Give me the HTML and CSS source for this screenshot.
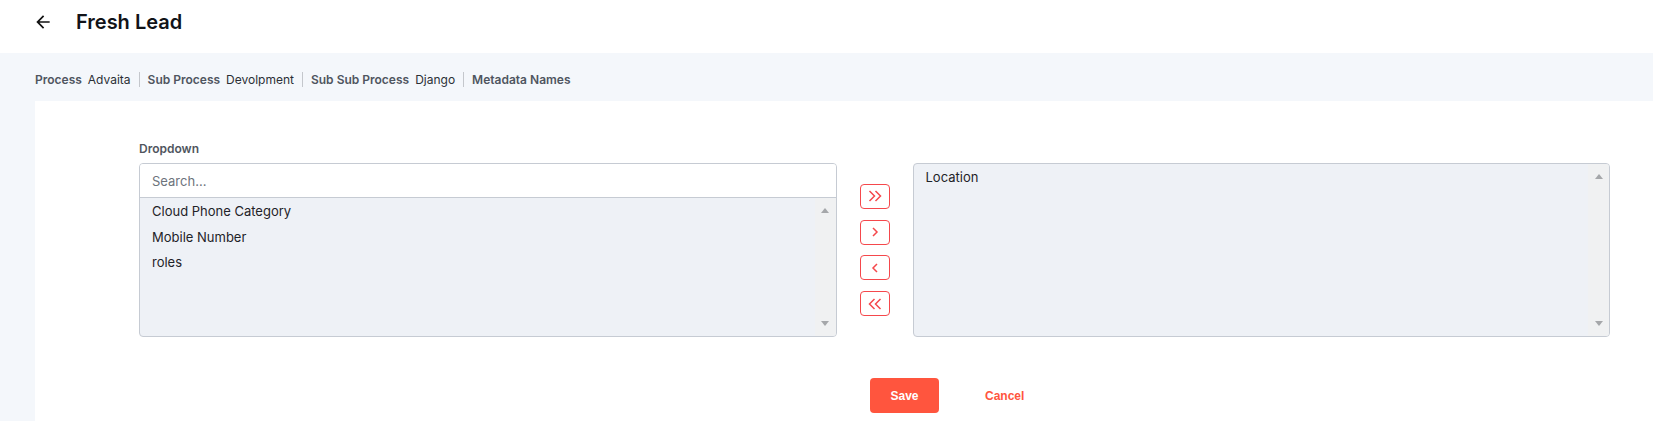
FILE: index.html
```html
<!DOCTYPE html>
<html lang="en">
<head>
<meta charset="utf-8">
<title>Fresh Lead</title>
<link rel="stylesheet" href="styles.css">
</head>
<body>
<header class="topbar">
  <button class="back" aria-label="Back">
    <svg width="20" height="20" viewBox="0 0 24 24"><path d="M20 11H7.830l5.590-5.590L12 4l-8 8 8 8 1.410-1.410L7.830 13H20v-2z" fill="#111"/></svg>
  </button>
  <h1 class="title">Fresh Lead</h1>
</header>
<main class="main">
  <nav class="crumbs">
    <span class="crumb"><span class="crumb-label">Process</span><span class="crumb-value">Advaita</span></span>
    <span class="sep"></span>
    <span class="crumb"><span class="crumb-label">Sub Process</span><span class="crumb-value">Devolpment</span></span>
    <span class="sep"></span>
    <span class="crumb"><span class="crumb-label">Sub Sub Process</span><span class="crumb-value">Django</span></span>
    <span class="sep"></span>
    <span class="crumb"><span class="crumb-label">Metadata Names</span></span>
  </nav>
  <section class="card">
    <div class="field-label">Dropdown</div>
    <div class="transfer">
      <div class="listbox">
        <div class="search"><input class="search-input" type="text" placeholder="Search..."></div>
        <div class="list-wrap">
          <ul class="items">
            <li>Cloud Phone Category</li>
            <li>Mobile Number</li>
            <li>roles</li>
          </ul>
          <div class="scrollbar"><span class="tri up"></span><span class="tri down"></span></div>
        </div>
      </div>
      <div class="controls">
        <button class="move" aria-label="Move all right">
          <svg width="14" height="12" viewBox="0 0 14 12"><polyline points="1.5,1 6.5,6 1.5,11" /><polyline points="7.5,1 12.5,6 7.5,11" /></svg>
        </button>
        <button class="move" aria-label="Move right">
          <svg width="8" height="10" viewBox="0 0 8 10"><polyline points="2,1 6,5 2,9" /></svg>
        </button>
        <button class="move" aria-label="Move left">
          <svg width="8" height="10" viewBox="0 0 8 10"><polyline points="6,1 2,5 6,9" /></svg>
        </button>
        <button class="move" aria-label="Move all left">
          <svg width="14" height="12" viewBox="0 0 14 12"><polyline points="6.5,1 1.5,6 6.5,11" /><polyline points="12.5,1 7.5,6 12.5,11" /></svg>
        </button>
      </div>
      <div class="listbox">
        <div class="list-wrap full">
          <ul class="items">
            <li>Location</li>
          </ul>
          <div class="scrollbar"><span class="tri up"></span><span class="tri down"></span></div>
        </div>
      </div>
    </div>
    <div class="actions">
      <button class="btn-save">Save</button>
      <button class="btn-cancel">Cancel</button>
    </div>
  </section>
</main>
</body>
</html>
```
FILE: styles.css
```css
* { box-sizing: border-box; }
html, body { margin: 0; padding: 0; }
body {
  font-family: Inter, "Noto Sans", "Liberation Sans", sans-serif;
  color: #1f2328;
  background: #ffffff;
  width: 1653px;
  height: 421px;
  overflow: hidden;
}

.topbar {
  height: 53px;
  padding: 10px 0 0 33px;
  display: flex;
  align-items: flex-start;
  background: #ffffff;
}
.back {
  border: 0;
  background: transparent;
  padding: 0;
  margin: 2px 23px 0 0;
  width: 20px;
  height: 20px;
  display: flex;
}
.title {
  margin: 0;
  font-size: 20px;
  font-weight: 600;
  line-height: 24px;
  color: #111318;
}

.main {
  background: #f4f7fb;
  padding-left: 35px;
  height: 368px;
  display: flex;
  flex-direction: column;
}

.crumbs {
  height: 48px;
  padding-top: 19px;
  display: flex;
  align-items: flex-start;
  font-size: 12px;
  line-height: 16px;
}
.crumb { display: flex; gap: 6px; }
.crumb-label { font-weight: 600; color: #4f5560; }
.crumb-value { color: #2b2f36; }
.sep {
  width: 1px;
  height: 15px;
  margin: 0 8px 0 8px;
  background: #c4c7cc;
}

.card {
  flex: 1;
  background: #ffffff;
  padding: 40px 43px 0 104px;
}
.field-label {
  font-size: 12px;
  font-weight: 600;
  line-height: 15px;
  color: #50555e;
  margin-bottom: 7px;
}

.transfer {
  display: grid;
  grid-template-columns: 1fr 76px 1fr;
  height: 174px;
}
.listbox {
  border: 1px solid #c6cbd3;
  border-radius: 4px;
  background: #eef1f6;
  display: flex;
  flex-direction: column;
  overflow: hidden;
}
.search {
  height: 34px;
  background: #ffffff;
  border-bottom: 1px solid #c6cbd3;
}
.search-input {
  width: 100%;
  height: 33px;
  border: 0;
  outline: none;
  background: transparent;
  padding: 0 12px;
  font-family: Inter, "Noto Sans", sans-serif;
  font-size: 13px;
  color: #1f2328;
}
.search-input::placeholder { color: #6d737c; }

.list-wrap {
  flex: 1;
  display: flex;
}
.items {
  flex: 1;
  list-style: none;
  margin: 0;
  padding: 1px 0 0 12px;
  font-size: 13px;
  line-height: 25.5px;
  color: #1f2328;
}
.scrollbar {
  width: 21px;
  background: #f0f1f2;
  display: flex;
  flex-direction: column;
  justify-content: space-between;
  align-items: center;
  padding: 10px 0 10px;
}
.tri {
  width: 0;
  height: 0;
  border-left: 4.5px solid transparent;
  border-right: 4.5px solid transparent;
}
.tri.up { border-bottom: 5px solid #a5a7aa; }
.tri.down { border-top: 5px solid #a5a7aa; }

.controls {
  display: flex;
  flex-direction: column;
  align-items: center;
  justify-content: center;
  gap: 10.7px;
}
.move {
  width: 30px;
  height: 25px;
  padding: 0;
  border: 1px solid #f5484c;
  border-radius: 4px;
  background: #ffffff;
  display: flex;
  align-items: center;
  justify-content: center;
}
.move svg polyline {
  fill: none;
  stroke: #f5484c;
  stroke-width: 1.5;
}

.actions {
  margin: 41px 0 0 731px;
  display: flex;
  align-items: center;
  gap: 30px;
}
.btn-save {
  width: 69px;
  height: 35px;
  border: 0;
  border-radius: 4px;
  background: #ff553e;
  color: #ffffff;
  font-family: "Liberation Sans", Arial, sans-serif;
  font-weight: 700;
  font-size: 12px;
}
.btn-cancel {
  height: 35px;
  border: 0;
  background: transparent;
  padding: 0 16px;
  color: #ff553e;
  font-family: "Liberation Sans", Arial, sans-serif;
  font-weight: 700;
  font-size: 12px;
}
```
